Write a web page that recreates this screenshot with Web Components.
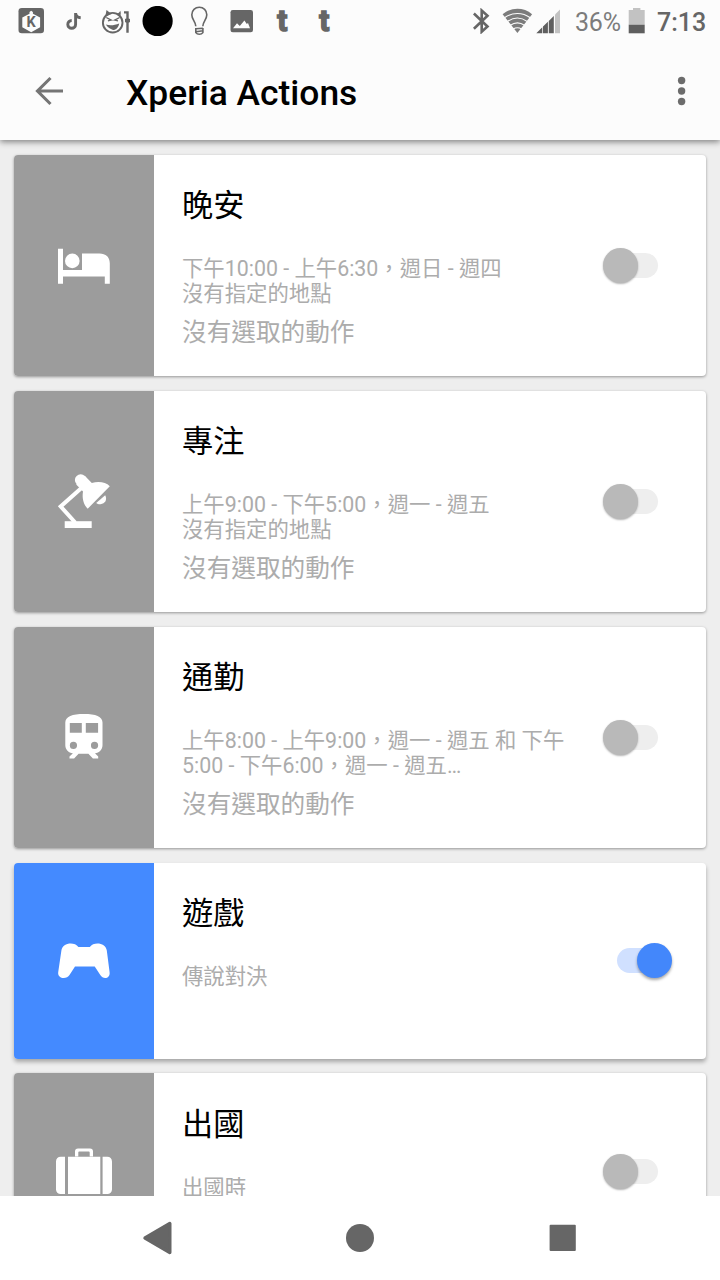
<!DOCTYPE html>
<html lang="zh-Hant">
<head>
<meta charset="utf-8">
<title>Xperia Actions</title>
<style>
html,body{margin:0;height:100%;overflow:hidden;background:#eee}
body{font-family:Roboto,"Noto Sans CJK TC",sans-serif}
</style>
</head>
<body>
<actions-screen></actions-screen>
<script>
// Each entry: viewBox followed by the glyph's markup.
const ICONS = {
  k: ['18 7 27 27', '<rect x="18.5" y="8" width="25.5" height="25.3" rx="3.3" fill="#666"/><path d="M31.2 10.8l1.700 1.300v1.600l7.200 3.900v9.600l-8.900 5-8.900-5v-9.600l7.200-3.900v-1.600z" fill="#fcfcfc"/><text x="26.600" y="27.300" font-size="14.500" font-weight="700" fill="#666" font-family="Roboto">K</text>'],
  note: ['66 12 16 19', '<path d="M75.600 13v11.400a3.900 3.900 0 1 1-3.900-3.900M75.600 13.200c.4 2.700 2.200 4.400 5.100 4.600" fill="none" stroke="#666" stroke-width="2.900"/>'],
  devil: ['101 9 30 25', '<circle cx="112.700" cy="22.700" r="9.800" fill="none" stroke="#666" stroke-width="1.900"/><path d="M105.300 16.800l1.200-6.800 5 4zM116 13.600c2 0 3.400-1 4.300-2.900.8 2.200.6 4.400-.6 6.300z" fill="#666"/><path d="M106.300 17.500l4.900 2.600-3.300.700M119.600 17.500l-4.900 2.600 3.300.700" fill="none" stroke="#666" stroke-width="1.300"/><path d="M105.800 24.600c4.500 1 9 .6 13.400-1.200-.8 4-3 6.400-6.200 6.600-2.800-1-5.200-2.500-7.200-5.400z" fill="#666"/><path d="M124 11.300h4.700v7.200l1.300.500v3l-1.300.800v9.900h-2.400V22.800l-1.300-.800v-3l1.300-.500v-5H124z" fill="#666"/>'],
  dot: ['142 6 31 31', '<circle cx="157.600" cy="21" r="15.100" fill="#000"/>'],
  bulb: ['190 6 19 30', '<g fill="none" stroke="#666" stroke-width="1.600"><path d="M195.800 26.300c-.2-4.800-4-6.600-4-11.500 0-4.500 3.300-7.500 7.500-7.500s7.500 3 7.500 7.500c0 4.900-3.800 6.700-4 11.500"/><path d="M195.900 28.800l7-.500M195.800 28v4.600c1.600 2.200 5.500 2.200 7.100 0V28M196 31.800l6.900-1"/></g>'],
  image: ['230 9 24 24', '<rect x="230.500" y="10" width="22.500" height="22.300" rx="2.300" fill="#666"/><path d="M233 28.300l4-5 2.800 2.700 4.600-5.500 2.400 3.400 1.200-.900 2 5.300z" fill="#fcfcfc"/>'],
  t: ['276 0 15 42', '<text x="277.200" y="30.600" font-size="30" font-weight="700" fill="#666" stroke="#666" stroke-width="1.500" font-family="Roboto">t</text>'],
  bluetooth: ['472 8 18 26', '<path d="M473.900 13.500l13.600 13-5.800 5.200V10.500l5.800 5.200-13.600 13" fill="none" stroke="#666" stroke-width="2.600"/>'],
  wifi: ['502 8 31 26', '<path d="M502.600 14.200c8.500-7.300 21-7.300 29.500 0L517.400 33z" fill="#7c7c7c"/><g fill="none" stroke="#fcfcfc" stroke-width="1.100"><path d="M504.500 17.800c7.800-5.800 18-5.800 25.800 0M507.500 21.500c6.200-4.400 13.600-4.400 19.800 0M510.300 25.300c4.500-3.100 9.700-3.100 14.200 0M513.200 28.900c2.800-1.600 5.600-1.600 8.400 0"/></g>'],
  signal: ['536 8 25 26', '<path d="M536.300 33.300l6-6v6zM543 33.300v-6.800l4.900-4.700v11.500zM548.800 33.300V20.900l5-5v17.400z" fill="#5f5f5f"/><path d="M555 33.300V14.600l5-5.100v23.800z" fill="#c2c2c2"/>'],
  battery: ['628 7 18 27', '<path d="M633 8h7.400v2H644.700v15H628.700V10H633z" fill="#c2c2c2"/><path d="M628.700 24.800h16v8.500h-16z" fill="#5f5f5f"/>'],
  back: ['34 76 31 30', '<path d="M63 91H37.500M50.500 78L37.500 91l13 13" fill="none" stroke="#757575" stroke-width="3.100"/>'],
  more: ['676 75 12 32', '<g fill="#6c6c6c"><circle cx="681.600" cy="80.500" r="3.700"/><circle cx="681.600" cy="91" r="3.700"/><circle cx="681.600" cy="101.500" r="3.700"/></g>'],
  bed: ['54 235 60 60', '<g fill="#fff"><path d="M58 248.800h5V270h19v-16.600h17.500c6.500 0 10.300 4 10.300 10v20.400h-5v-7.300H63v7.300h-5z"/><circle cx="72.300" cy="260.900" r="7.300"/></g>'],
  lamp: ['54 471 60 60', '<g fill="#fff"><path d="M64.700 521.200h27v6.800h-27z"/><path d="M82 487.500L60.700 506.500l14.500 16" fill="none" stroke="#fff" stroke-width="4"/><circle cx="80.700" cy="480" r="5.800"/><path d="M84.800 475.800l7 7.200c7-1.900 14-.8 18 3.200L87.700 508.800c-4.300-4.500-5.800-10.500-4.700-17.300l-6.800-7z"/><path d="M105.200 495.300c2.300 4.300-.2 8.600-4.700 8.900-1.800.1-3.300-.5-4.300-1.300z"/></g>'],
  train: ['54 707 60 60', '<path fill-rule="evenodd" fill="#fff" d="M65.300 722.500c0-6 7-8.500 18.700-8.500s18.500 2.500 18.500 8.500v22.800c0 4.300-3.300 7.600-7.500 8l3.200 3.300v1.900h-5.300l-4.500-4.700H78.600l-4.500 4.700h-4.600v-1.900l3.400-3.300c-4.300-.4-7.600-3.700-7.600-8zM69.800 723v9.800h12V723zm16 0v9.800h12.300V723zM73.400 741.800a3.600 3.600 0 1 0 .1 7.200 3.600 3.600 0 0 0-.1-7.200zm21.100 0a3.600 3.600 0 1 0 .1 7.200 3.600 3.600 0 0 0-.1-7.200z"/>'],
  game: ['54 931 60 60', '<path fill="#fff" d="M61.400 950.500c.9-8 13-9.200 17-3.600h11.400c4-5.600 16-4.400 17 3.600l2.800 21.800c.8 6.500-6.500 7.600-9.300 2.800l-5.600-8.500H75l-5.500 8.500c-2.900 4.800-12.200 3.700-11.300-2.800z"/>'],
  case: ['54 1141 60 60', '<g fill="#fff"><path fill-rule="evenodd" d="M75 1156.400v-5c0-2 1-3 3-3h12c2 0 3 1 3 3v5zm3.300 0h11.400v-3.800c0-.8-.4-1.200-1.200-1.200h-9c-.8 0-1.200.4-1.200 1.200z"/><path d="M65 1156.700h-4.300c-2.700 0-4.700 2-4.700 4.700v28c0 2.700 2 4.700 4.700 4.700H65zM68 1156.700h32.300v37.400H68zM102.600 1156.700h4.700c2.700 0 4.700 2 4.700 4.700v28c0 2.700-2 4.700-4.700 4.700h-4.700z"/></g>'],
  navback: ['142 1221 31 34', '<path d="M145 1238l24.800-14.500v29z" fill="#666" stroke="#666" stroke-width="3.400" stroke-linejoin="round"/>'],
  home: ['345 1223 30 30', '<circle cx="360" cy="1238" r="14" fill="#666"/>'],
  recent: ['549 1224 28 28', '<rect x="549.600" y="1224.800" width="26.200" height="26.200" rx="1" fill="#666"/>']
};

class UiIcon extends HTMLElement {
  connectedCallback() {
    const [box, art] = ICONS[this.getAttribute('name')];
    const [, , w, h] = box.split(' ');
    this.attachShadow({mode: 'open'}).innerHTML =
      `<style>:host{display:block;flex:none}svg{display:block}</style>
       <svg width="${w}" height="${h}" viewBox="${box}">${art}</svg>`;
  }
}
customElements.define('ui-icon', UiIcon);

class StatusBar extends HTMLElement {
  connectedCallback() {
    this.attachShadow({mode: 'open'}).innerHTML = `
      <style>
        :host{display:flex;align-items:flex-start;height:43px;padding-left:18px;box-sizing:border-box;background:#fcfcfc}
        span{font-size:25px;line-height:30px;margin-top:8px;white-space:nowrap;flex:none}
        .pct{width:53px;margin-left:14px;color:#7c7c7c;letter-spacing:-.2px}
        .time{margin-left:11px;color:#666;font-weight:500}
      </style>
      <ui-icon name="k" style="margin-top:7px"></ui-icon>
      <ui-icon name="note" style="margin:12px 0 0 21px"></ui-icon>
      <ui-icon name="devil" style="margin:9px 0 0 19px"></ui-icon>
      <ui-icon name="dot" style="margin:6px 0 0 11px"></ui-icon>
      <ui-icon name="bulb" style="margin:6px 0 0 17px"></ui-icon>
      <ui-icon name="image" style="margin:9px 0 0 21px"></ui-icon>
      <ui-icon name="t" style="margin:0 0 0 22px"></ui-icon>
      <ui-icon name="t" style="margin:0 0 0 27px"></ui-icon>
      <ui-icon name="bluetooth" style="margin:8px 0 0 139px"></ui-icon>
      <ui-icon name="wifi" style="margin:8px 0 0 12px"></ui-icon>
      <ui-icon name="signal" style="margin:8px 0 0 3px"></ui-icon>
      <span class="pct">36%</span>
      <ui-icon name="battery" style="margin-top:7px"></ui-icon>
      <span class="time">7:13</span>`;
  }
}
customElements.define('status-bar', StatusBar);

class AppBar extends HTMLElement {
  connectedCallback() {
    this.attachShadow({mode: 'open'}).innerHTML = `
      <style>
        :host{display:flex;align-items:center;height:97px;box-sizing:border-box;padding:0 32px 1px 34px;background:#fcfcfc}
        h1{margin:4px auto 0 61px;font-size:35.400px;line-height:42px;font-weight:500;color:#000;white-space:nowrap}
      </style>
      <ui-icon name="back"></ui-icon><h1><slot></slot></h1><ui-icon name="more"></ui-icon>`;
  }
}
customElements.define('app-bar', AppBar);

class ToggleSwitch extends HTMLElement {
  connectedCallback() {
    this.attachShadow({mode: 'open'}).innerHTML = `
      <style>
        :host{display:flex;flex:none;align-items:center;width:70px;height:36px}
        .track{width:41px;height:25px;margin-left:15px;border-radius:3px 13px 13px 3px;background:#eee;display:flex;align-items:center}
        .thumb{flex:none;width:35px;height:35px;border-radius:50%;background:#b9b9b9;margin-left:-14.500px;box-shadow:0 1px 2px rgba(0,0,0,.3)}
        :host([on]) .track{background:#d0e0ff;border-radius:13px}
        :host([on]) .thumb{background:#4387fb;margin-left:20px;box-shadow:0 2px 3px rgba(0,0,0,.35)}
      </style>
      <div class="track"><div class="thumb"></div></div>`;
  }
}
customElements.define('toggle-switch', ToggleSwitch);

class ActionCard extends HTMLElement {
  connectedCallback() {
    const on = this.hasAttribute('on');
    this.attachShadow({mode: 'open'}).innerHTML = `
      <style>
        :host{display:flex;flex:none;height:221.500px;border-radius:4px;background:#fff;box-shadow:0 1px 3px rgba(0,0,0,.38)}
        :host([short]){height:196px}
        :host([on]){box-shadow:0 3px 4px rgba(0,0,0,.3)}
        .tile{width:140px;flex:none;display:flex;align-items:center;justify-content:center;background:#9c9c9c;border-radius:4px 0 0 4px}
        :host([on]) .tile{background:#448aff}
        .text{flex:1;padding:30.500px 0 0 28px;white-space:nowrap}
        .title{font-size:31.200px;line-height:42px;color:#000}
        .detail{font-size:21.370px;line-height:25px;margin-top:29px;color:#acacac}
        .note{font-size:24.650px;line-height:30px;margin-top:12px;color:#acacac}
        toggle-switch{align-self:center;margin-right:34px}
      </style>
      <div class="tile"><ui-icon name="${this.getAttribute('icon')}"></ui-icon></div>
      <div class="text">
        <div class="title"><slot name="title"></slot></div>
        <div class="detail"><slot></slot></div>
        <div class="note"><slot name="note"></slot></div>
      </div>
      <toggle-switch ${on ? 'on' : ''}></toggle-switch>`;
  }
}
customElements.define('action-card', ActionCard);

class NavBar extends HTMLElement {
  connectedCallback() {
    this.attachShadow({mode: 'open'}).innerHTML = `
      <style>
        :host{display:grid;grid-template-columns:31px 30px 28px;column-gap:172px;align-items:center;height:84px;padding-left:142px;box-sizing:border-box;background:#fff}
        ui-icon:last-child{margin-left:2px}
      </style>
      <ui-icon name="navback"></ui-icon><ui-icon name="home"></ui-icon><ui-icon name="recent"></ui-icon>`;
  }
}
customElements.define('nav-bar', NavBar);

class ActionsScreen extends HTMLElement {
  connectedCallback() {
    this.attachShadow({mode: 'open'}).innerHTML = `
      <style>
        :host{display:flex;flex-direction:column;width:720px;height:1280px;overflow:hidden;background:#eee}
        header{flex:none;height:140px;z-index:1;box-shadow:0 2px 6px rgba(0,0,0,.45)}
        main{flex:1;min-height:0;overflow:hidden;display:flex;flex-direction:column;gap:14.500px;padding:14.500px 14px 0}
        nav-bar{flex:none}
      </style>
      <header><status-bar></status-bar><app-bar>Xperia Actions</app-bar></header>
      <main>
        <action-card icon="bed"><span slot="title">晚安</span><div>下午10:00 - 上午6:30，週日 - 週四</div><div>沒有指定的地點</div><span slot="note">沒有選取的動作</span></action-card>
        <action-card icon="lamp"><span slot="title">專注</span><div>上午9:00 - 下午5:00，週一 - 週五</div><div>沒有指定的地點</div><span slot="note">沒有選取的動作</span></action-card>
        <action-card icon="train"><span slot="title">通勤</span><div>上午8:00 - 上午9:00，週一 - 週五 和 下午</div><div>5:00 - 下午6:00，週一 - 週五…</div><span slot="note">沒有選取的動作</span></action-card>
        <action-card icon="game" short on><span slot="title">遊戲</span><div>傳說對決</div></action-card>
        <action-card icon="case" short><span slot="title">出國</span><div>出國時</div></action-card>
      </main>
      <nav-bar></nav-bar>`;
  }
}
customElements.define('actions-screen', ActionsScreen);
</script>
</body>
</html>
